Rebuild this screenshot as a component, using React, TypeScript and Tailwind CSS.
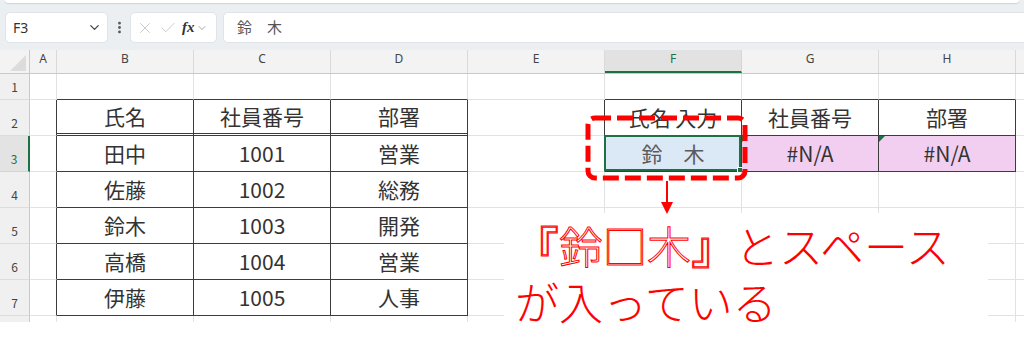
import { Check, ChevronDown, EllipsisVertical, X } from "lucide-react";

const COLS = ["A", "B", "C", "D", "E", "F", "G", "H"];

const TEXT: Record<number, string[]> = {
  2: ["", "氏名", "社員番号", "部署", "", "氏名 入力", "社員番号", "部署"],
  3: ["", "田中", "1001", "営業", "", "鈴　木", "#N/A", "#N/A"],
  4: ["", "佐藤", "1002", "総務", "", "", "", ""],
  5: ["", "鈴木", "1003", "開発", "", "", "", ""],
  6: ["", "高橋", "1004", "営業", "", "", "", ""],
  7: ["", "伊藤", "1005", "人事", "", "", "", ""],
};

// border colours per cell: table edges are dark, the rest is grid
function rightCls(r: number, c: number) {
  if (r >= 2 && r <= 7 && c <= 3) return "border-r-[#3c3c3c]";
  if (r >= 2 && r <= 3 && c >= 4) return "border-r-[#3c3c3c]";
  return "border-r-[#e2e2e2]";
}

function bottomCls(r: number, c: number) {
  if (r === 2 && c >= 1 && c <= 3) return "border-b-[3px] border-double border-b-[#3c3c3c]";
  if (r >= 1 && r <= 7 && c >= 1 && c <= 3) return "border-b-[#3c3c3c]";
  if (r >= 1 && r <= 3 && c >= 5) return "border-b-[#3c3c3c]";
  return "border-b-[#e2e2e2]";
}

function bgCls(r: number, c: number) {
  if (r === 3 && c === 5) return "bg-[#dbe8f6] text-[#5a5a5a]";
  if (r === 3 && c >= 6) return "bg-[#f2cff0] text-[#333]";
  return "bg-white text-[#333]";
}

function Row({ r }: { r: number }) {
  const h = r === 1 ? "h-[26px]" : "h-[36px]";
  const selected = r === 3;
  return (
    <div className={`flex ${h}`}>
      <div
        className={
          selected
            ? "w-[30px] shrink-0 flex items-end justify-center pb-[4px] bg-[#e3e3e3] border-r-2 border-r-[#1e7145] border-b border-b-[#d4d4d4] text-[12px] leading-[16px] text-[#1e7145]"
            : "w-[30px] shrink-0 flex items-end justify-center pb-[4px] bg-[#f0f0f0] border-r border-r-[#c9c9c9] border-b border-b-[#dcdcdc] text-[12px] leading-[16px] text-[#444]"
        }
      >
        {r < 8 ? r : ""}
      </div>
      {COLS.map((col, c) => (
        <div
          key={col}
          className={`relative shrink-0 ${c === 0 ? "w-[27px]" : "w-[137px]"} border-r border-b ${rightCls(r, c)} ${bottomCls(r, c)} ${bgCls(r, c)} flex items-center justify-center text-[21px] leading-none`}
        >
          {TEXT[r]?.[c]}
          {r === 3 && c === 5 && (
            <div className="absolute -left-px -top-px right-0 bottom-0 border-2 border-[#1e7145]">
              <div className="absolute -right-[4px] -bottom-[4px] w-[6px] h-[6px] bg-[#1e7145] border border-white" />
            </div>
          )}
          {r === 3 && c >= 6 && (
            <div className="absolute left-0 top-0 w-0 h-0 border-t-[6px] border-t-[#1e7145] border-r-[6px] border-r-transparent" />
          )}
        </div>
      ))}
      <div className="flex-1 border-b border-b-[#e2e2e2] bg-white" />
    </div>
  );
}

export default function App() {
  return (
    <div className="relative w-[1024px] h-[351px] overflow-hidden bg-white font-['Noto_Sans_CJK_JP',sans-serif]">
      {/* ribbon edge + formula bar */}
      <div className="h-[50px] bg-[#eceff2]">
        <div className="mx-[5px] h-[3px] bg-white rounded-b-[4px] shadow-[0_1px_1px_rgba(0,0,0,0.12)]" />
        <div className="mt-[9px] h-[31px] flex items-stretch">
          <div className="ml-[5px] w-[103px] bg-white rounded-[5px] border border-[#e0e4e8] flex items-center justify-between pl-[7px] pr-[5px]">
            <span className="font-['Noto_Sans',sans-serif] text-[14px] text-[#333]">F3</span>
            <ChevronDown size={15} strokeWidth={2} className="text-[#444]" />
          </div>
          <div className="w-[22px] flex items-center justify-center">
            <EllipsisVertical size={15} strokeWidth={2.5} className="text-[#555]" />
          </div>
          <div className="w-[87px] bg-white rounded-[5px] border border-[#e0e4e8] flex items-center pl-[5px] gap-[5px]">
            <X size={18} strokeWidth={1.2} className="text-[#c4c4c4]" />
            <Check size={18} strokeWidth={1.2} className="text-[#c4c4c4]" />
            <span className="font-['Liberation_Serif',serif] italic font-bold text-[15px] text-[#333] leading-none">
              fx
            </span>
            <ChevronDown size={12} strokeWidth={1.5} className="-ml-[4px] text-[#888]" />
          </div>
          <div className="ml-[6px] flex-1 bg-white rounded-l-[5px] border border-r-0 border-[#e0e4e8] flex items-center pl-[13px] text-[15px] text-[#555]">
            鈴　木
          </div>
        </div>
      </div>

      {/* sheet */}
      <div className="h-[272px] overflow-hidden bg-white">
        <div className="flex h-[24px] bg-[#f3f3f3] border-b border-b-[#c9c9c9] font-['Noto_Sans',sans-serif] text-[12px] leading-[16px] text-[#444]">
          <div className="relative w-[30px] shrink-0 border-r border-r-[#c9c9c9]">
            <div className="absolute right-[3px] bottom-[2px] w-0 h-0 border-l-[16px] border-l-transparent border-b-[16px] border-b-[#dcdcdc]" />
          </div>
          {COLS.map((col, c) => (
            <div
              key={col}
              className={
                col === "F"
                  ? "w-[137px] shrink-0 flex justify-center pt-[1px] bg-[#e2e2e2] border-r border-r-[#d6d6d6] border-b-2 border-b-[#1e7145] text-[#1e7145]"
                  : `${c === 0 ? "w-[27px]" : "w-[137px]"} shrink-0 flex justify-center pt-[1px] border-r border-r-[#dadada]`
              }
            >
              {col}
            </div>
          ))}
          <div className="flex-1" />
        </div>
        {[1, 2, 3, 4, 5, 6, 7, 8].map((r) => (
          <Row key={r} r={r} />
        ))}
      </div>

      {/* annotation */}
      <div className="absolute left-[504px] top-[213px] w-[484px] h-[120px] bg-white pl-[11px] pt-[4px] text-[44px] leading-[56px] text-[#ff0000] font-light">
        <div>
          <span className="text-white [-webkit-text-stroke:1px_#ff0000]">『鈴□木』</span>とスペース
        </div>
        <div>が入っている</div>
      </div>

      <svg className="absolute left-0 top-0 pointer-events-none" width="1024" height="351">
        <rect
          x="588"
          y="118"
          width="157"
          height="60"
          rx="7"
          fill="none"
          stroke="#ff0000"
          strokeWidth="5"
          strokeDasharray="16 6"
        />
        <line x1="667" y1="181" x2="667" y2="204" stroke="#ff0000" strokeWidth="2" />
        <polygon points="661,202 673,202 667,214" fill="#ff0000" />
      </svg>
    </div>
  );
}
